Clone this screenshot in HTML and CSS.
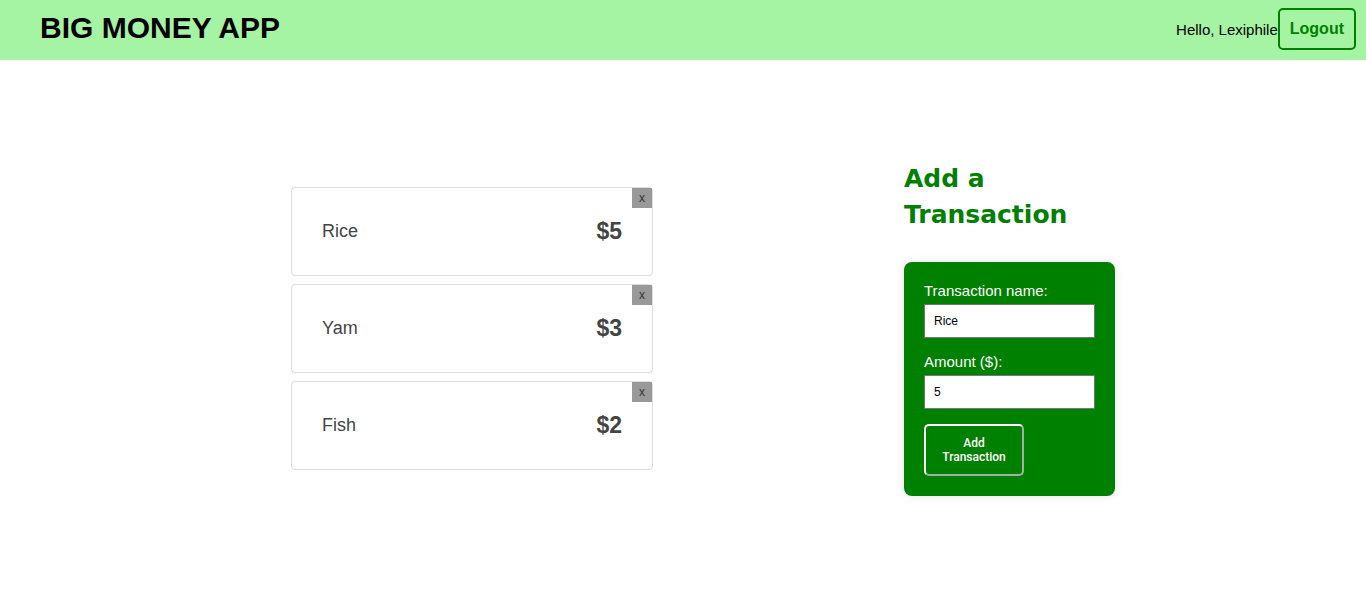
FILE: index.html
```html
<!DOCTYPE html>
<html lang="en">
<head>
<meta charset="utf-8">
<meta name="viewport" content="width=device-width, initial-scale=1">
<title>Big Money App</title>
<link rel="stylesheet" href="styles.css">
</head>
<body>
<header class="navbar">
  <h1 class="brand">BIG MONEY APP</h1>
  <div class="account">
    <span class="greeting">Hello, Lexiphile</span>
    <button class="logout" type="button">Logout</button>
  </div>
</header>
<main class="content">
  <ul class="transactions">
    <li class="transaction">
      <span class="name">Rice</span>
      <strong class="amount">$5</strong>
      <button class="remove" type="button" aria-label="Delete Rice">x</button>
    </li>
    <li class="transaction">
      <span class="name">Yam</span>
      <strong class="amount">$3</strong>
      <button class="remove" type="button" aria-label="Delete Yam">x</button>
    </li>
    <li class="transaction">
      <span class="name">Fish</span>
      <strong class="amount">$2</strong>
      <button class="remove" type="button" aria-label="Delete Fish">x</button>
    </li>
  </ul>
  <section class="add">
    <h2 class="add-title">Add a<br>Transaction</h2>
    <form class="form">
      <label class="label" for="name">Transaction name:</label>
      <input class="field" id="name" type="text" value="Rice">
      <label class="label" for="amount">Amount ($):</label>
      <input class="field" id="amount" type="text" inputmode="numeric" value="5">
      <button class="submit" type="button">Add Transaction</button>
    </form>
  </section>
</main>
</body>
</html>
```
FILE: styles.css
```css
* {
  box-sizing: border-box;
}

body {
  margin: 0;
  background: #fff;
  color: #000;
  font-family: Arial, "Liberation Sans", sans-serif;
}

button,
input {
  font-family: inherit;
}

.navbar {
  display: flex;
  justify-content: space-between;
  align-items: flex-start;
  height: 60px;
  padding: 8px 10px 0 40px;
  background: #a4f4a4;
}

.brand {
  margin: 0;
  font-size: 30px;
  line-height: 40px;
}

.account {
  display: flex;
  align-items: center;
}

.greeting {
  font-size: 15px;
}

.logout {
  height: 42px;
  padding: 0 10px;
  border: 2px solid #008000;
  border-radius: 5px;
  background: transparent;
  color: #008000;
  font-size: 16px;
  font-weight: bold;
}

.content {
  display: flex;
  justify-content: space-evenly;
  align-items: center;
  padding: 101px 0 100px 40px;
}

.transactions {
  display: flex;
  flex-direction: column;
  gap: 8px;
  width: 362px;
  margin: 0;
  padding: 0;
  list-style: none;
}

.transaction {
  position: relative;
  display: flex;
  justify-content: space-between;
  align-items: center;
  height: 89px;
  padding: 0 30px;
  border: 1px solid #ddd;
  border-radius: 4px;
  color: #444;
}

.name {
  font-size: 18px;
}

.amount {
  font-size: 23px;
}

.remove {
  position: absolute;
  top: 0;
  right: 0;
  width: 20px;
  height: 20px;
  padding: 0;
  border: 0;
  background: #999;
  color: #333;
  font-size: 12px;
}

.add {
  width: 211px;
}

.add-title {
  margin: 0 0 29px;
  color: #008000;
  font-family: "Arial Black", "DejaVu Sans", sans-serif;
  font-size: 25px;
  font-weight: 900;
  line-height: 36px;
}

.form {
  display: flex;
  flex-direction: column;
  padding: 20px;
  border-radius: 8px;
  background: #008000;
  box-shadow: 0 0 10px rgba(0, 0, 0, 0.1);
}

.label {
  margin-bottom: 4px;
  color: #fff;
  font-size: 15px;
  line-height: 18px;
}

.field {
  width: 100%;
  height: 34px;
  margin-bottom: 15px;
  padding: 0 9px;
  border: 1px solid #767676;
  background: #fff;
  color: #000;
  font-size: 12px;
}

.submit {
  align-self: flex-start;
  width: 100px;
  padding: 10px;
  border: 2px outset #fff;
  border-radius: 5px;
  background: #008000;
  color: #fff;
  font-family: Roboto, Arial, sans-serif;
  font-size: 12px;
  font-weight: 500;
  line-height: 14px;
}
```
